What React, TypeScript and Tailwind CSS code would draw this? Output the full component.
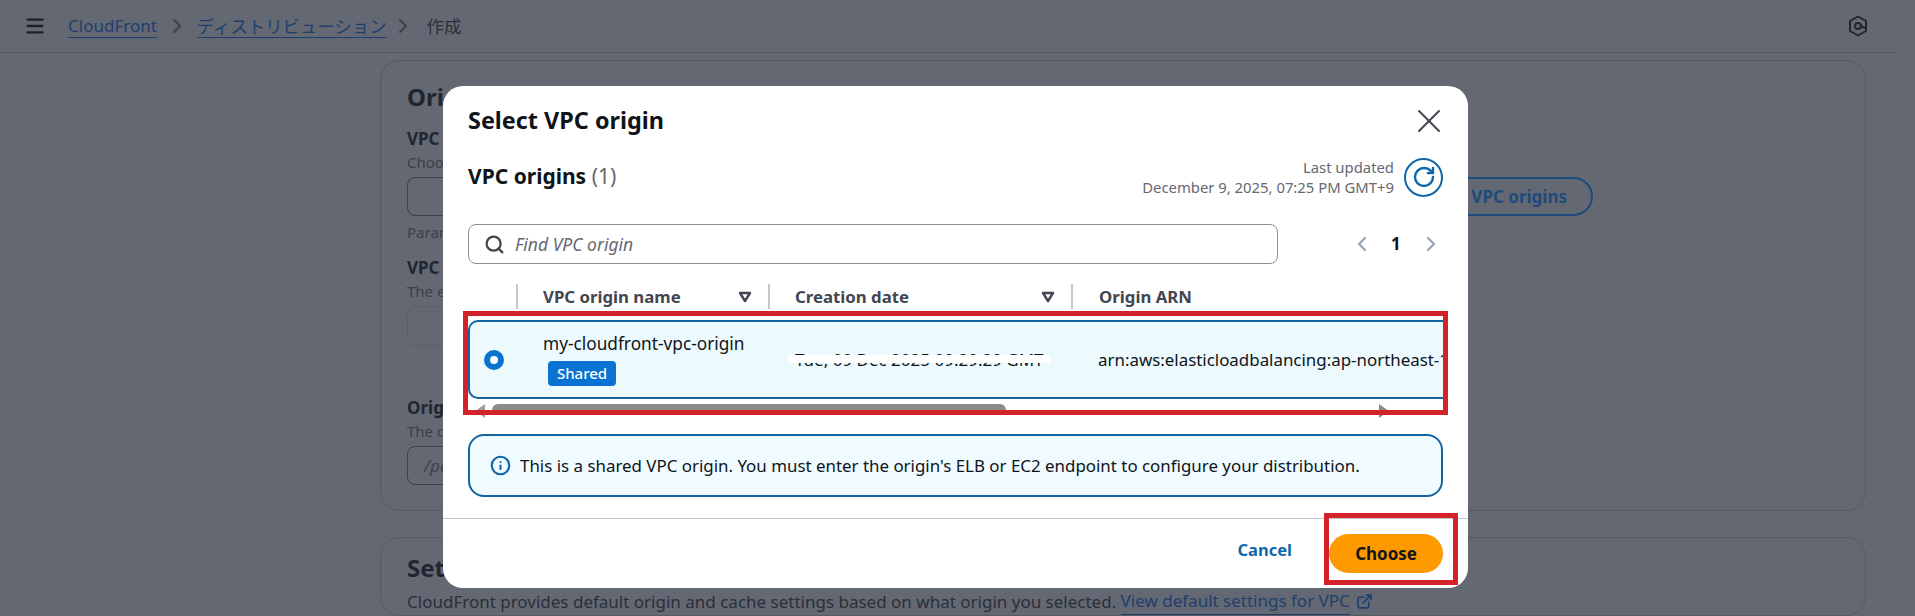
import { Menu, ChevronRight, ChevronLeft, Search, X, RotateCw, Info, ExternalLink } from 'lucide-react';

const SortIcon = () => (
  <svg width="14" height="12" viewBox="0 0 14 12" className="shrink-0">
    <path d="M2 2h10L7 10z" fill="none" stroke="#424650" strokeWidth="2.4" strokeLinejoin="round" />
  </svg>
);

const HexIcon = () => (
  <svg width="20" height="22" viewBox="0 0 20 22" fill="none" stroke="#22262e" strokeWidth="2">
    <path d="M10 1.5l8 4.5v10l-8 4.5-8-4.5V6z" strokeLinejoin="round" />
    <circle cx="10" cy="11" r="3" />
    <path d="M12 10.5l5 2.5" />
  </svg>
);

function Background() {
  return (
    <div className="h-[616px] w-full overflow-hidden bg-[#646872] text-[#1f2630]">
      <div className="mr-[19px] flex h-[53px] items-center border-b border-[#565a64] pl-6 pr-[28px] text-[17px]">
        <Menu className="h-[22px] w-[22px] text-[#1c2029]" strokeWidth={2.6} />
        <span className="ml-[22px] border-b border-[#1e3f6e] leading-[22px] text-[#1e3f6e]">CloudFront</span>
        <ChevronRight className="ml-[8px] h-6 w-6 text-[#3c4049]" />
        <span className="ml-[8px] border-b border-[#1e3f6e] text-[17.4px] leading-[22px] text-[#1e3f6e]">ディストリビューション</span>
        <ChevronRight className="ml-[4px] h-6 w-6 text-[#3c4049]" />
        <span className="ml-[12px] text-[17.5px] text-[#2b2f38]">作成</span>
        <div className="ml-auto">
          <HexIcon />
        </div>
      </div>

      <div className="ml-[380px] mr-[49px] mt-[7px] flex h-[451px] flex-col rounded-[20px] border border-[#565a64] px-[26px] pt-[20px]">
        <h2 className="text-[24px] font-bold leading-[32px]">Origin</h2>
        <div className="mt-[14px] text-[17px] font-bold leading-[24px]">VPC origin</div>
        <div className="text-[15px] leading-[22px] text-[#3c4049]">Choose a VPC origin</div>
        <div className="mt-[4px] flex items-center gap-4">
          <div className="h-[39px] min-w-0 flex-1 rounded-lg border border-[#3c4049]" />
          <div className="mr-[246px] flex h-[39px] shrink-0 items-center whitespace-nowrap rounded-full border-2 border-[#1e4a7c] px-[24px] text-[17px] font-bold text-[#1e4a7c]">
            Create VPC origins
          </div>
        </div>
        <div className="mt-[5px] text-[15px] leading-[22px] text-[#3c4049]">Parameters</div>
        <div className="mt-[13px] text-[17px] font-bold leading-[24px]">VPC origin domain</div>
        <div className="text-[15px] leading-[22px] text-[#3c4049]">The endpoint</div>
        <div className="mt-[4px] h-[40px] w-[1000px] rounded-lg border border-[#5c606a]" />
        <div className="mt-[50px] text-[17px] font-bold leading-[24px]">Origin path</div>
        <div className="text-[15px] leading-[22px] text-[#3c4049]">The directory</div>
        <div className="mt-[4px] flex h-[39px] w-[1000px] items-center rounded-lg border border-[#3c4049] px-4 text-[17px] italic text-[#3c4049]">
          /path
        </div>
      </div>

      <div className="ml-[380px] mr-[49px] mt-[26px] rounded-[20px] border border-[#565a64] px-[26px] pt-[14px]">
        <h2 className="text-[24px] font-bold leading-[32px]">Settings</h2>
        <div className="mt-[4px] flex items-center text-[17px] text-[#2b2f38]">
          CloudFront provides default origin and cache settings based on what origin you selected.&nbsp;
          <span className="border-b border-[#1e3f6e] text-[#1e3f6e]">View default settings for VPC</span>
          <ExternalLink className="ml-[6px] h-[17px] w-[17px] text-[#1e3f6e]" strokeWidth={2.4} />
        </div>
      </div>
    </div>
  );
}

function Modal() {
  return (
    <div className="absolute left-[443px] top-[86px] flex h-[502px] w-[1025px] flex-col rounded-[20px] bg-white text-[#0f141a]">
      <div className="flex flex-1 flex-col px-[25px]">
        <div className="mt-[19px] flex h-[32px] items-center justify-between">
          <h1 className="text-[23.4px] font-bold">Select VPC origin</h1>
          <X className="mr-[-6px] h-[40px] w-[40px] text-[#424650]" strokeWidth={1.2} />
        </div>

        <div className="mt-[16px] flex h-[48px] items-center justify-between">
          <h2 className="text-[21px] font-bold">
            VPC origins <span className="font-normal text-[#656871]">(1)</span>
          </h2>
          <div className="flex items-center gap-[10px]">
            <div className="text-right text-[14.85px] leading-[20px] text-[#656871]">
              <div>Last updated</div>
              <div>December 9, 2025, 07:25 PM GMT+9</div>
            </div>
            <div className="flex h-[39px] w-[39px] items-center justify-center rounded-full border-2 border-[#0f67ab]">
              <RotateCw className="h-[24px] w-[24px] text-[#0f67ab]" strokeWidth={2.4} />
            </div>
          </div>
        </div>

        <div className="mt-[23px] flex items-center">
          <div className="flex h-[40px] w-[810px] items-center rounded-lg border border-[#8c8c94] pl-[15px]">
            <Search className="h-[21px] w-[21px] text-[#424650]" strokeWidth={2.6} />
            <span className="ml-[10px] text-[17.5px] italic text-[#656871]">Find VPC origin</span>
          </div>
          <ChevronLeft className="ml-[72px] h-[24px] w-[24px] text-[#9ba7b6]" strokeWidth={2.4} />
          <span className="ml-[17px] text-[17px] font-bold">1</span>
          <ChevronRight className="ml-[18px] h-[24px] w-[24px] text-[#9ba7b6]" strokeWidth={2.4} />
        </div>

        <div className="mt-[20px] flex h-[25px] items-center text-[16.8px] font-bold text-[#424650]">
          <div className="ml-[26px] h-full w-[24px] shrink-0 border-r-2 border-[#c6c6cd]" />
          <div className="flex h-full w-[252px] shrink-0 items-center justify-between border-r-2 border-[#c6c6cd] pl-[25px] pr-[16px]">
            VPC origin name
            <SortIcon />
          </div>
          <div className="flex h-full w-[303px] shrink-0 items-center justify-between border-r-2 border-[#c6c6cd] pl-[25px] pr-[16px]">
            Creation date
            <SortIcon />
          </div>
          <div className="pl-[26px]">Origin ARN</div>
        </div>

        <div className="mt-[11px] flex h-[79px] items-center overflow-hidden rounded-l-[10px] border-y-2 border-l-2 border-[#15639f] bg-[#ecfafe] text-[17px]">
          <div className="ml-[14px] h-[20px] w-[20px] shrink-0 rounded-full border-[6px] border-[#0972d3] bg-white" />
          <div className="mb-[2px] ml-[39px] w-[252px] shrink-0">
            <div className="text-[17.25px] leading-[24px]">my-cloudfront-vpc-origin</div>
            <div className="ml-[5px] mt-[5px] flex h-[25px] w-[68px] items-center justify-center rounded bg-[#0972d3] text-[15px] font-medium text-white">
              Shared
            </div>
          </div>
          <div className="relative w-[303px] shrink-0 whitespace-nowrap">
            Tue, 09 Dec 2025 09:29:29 GMT
            <div className="absolute left-[-7px] top-[8px] h-[8px] w-[262px] bg-white" />
          </div>
          <div className="whitespace-nowrap text-[16.9px]">arn:aws:elasticloadbalancing:ap-northeast-1:123456789012</div>
        </div>

        <div className="relative mt-[5px] h-[10px]">
          <div className="absolute left-[24px] top-0 h-[10px] w-[514px] rounded-t-md bg-[#8c8c8c]" />
          <div className="absolute left-[7px] top-0 h-0 w-0 border-y-[7px] border-r-[10px] border-y-transparent border-r-[#a0a0a0]" />
          <div className="absolute left-[911px] top-0 h-0 w-0 border-y-[7px] border-l-[10px] border-y-transparent border-l-[#8c8c8c]" />
        </div>

        <div className="mt-[20px] flex h-[63px] items-center rounded-[16px] border-2 border-[#15639f] bg-[#f0fbff] pl-[20px] text-[16.9px]">
          <Info className="h-[21px] w-[21px] text-[#0f67ab]" strokeWidth={2.4} />
          <span className="ml-[9px]">
            This is a shared VPC origin. You must enter the origin's ELB or EC2 endpoint to configure your distribution.
          </span>
        </div>
      </div>

      <div className="mb-[15px] mt-[21px] flex h-[55px] items-end justify-end border-t border-[#c6c6cd] pr-[25px]">
        <span className="mb-[10px] mr-[37px] text-[16.5px] font-bold text-[#0f67ab]">Cancel</span>
        <div className="flex h-[39px] w-[114px] items-center justify-center rounded-full bg-[#ff9900] text-[16.9px] font-bold text-[#0f141a]">
          Choose
        </div>
      </div>
    </div>
  );
}

export default function App() {
  return (
    <div className="relative h-[616px] w-[1915px] overflow-hidden" style={{ fontFamily: '"Noto Sans", "Noto Sans CJK JP", sans-serif' }}>
      <Background />
      <Modal />
      {/* red annotations on top of the screenshot */}
      <div className="absolute left-[463px] top-[311px] h-[104px] w-[985px] border-[5px] border-[#d2232a]" />
      <div className="absolute left-[1324px] top-[513px] h-[72px] w-[134px] border-[5px] border-[#d2232a]" />
    </div>
  );
}
